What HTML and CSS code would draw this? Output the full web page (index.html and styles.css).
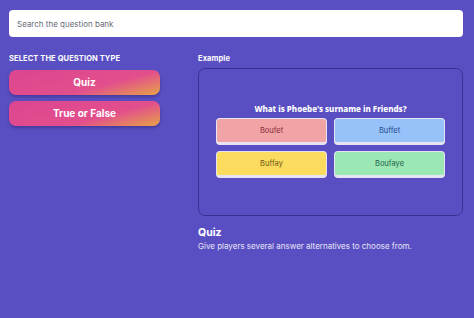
FILE: index.html
```html
<!DOCTYPE html>
<html lang="en">
<head>
    <meta charset="UTF-8">
    <meta name="viewport" content="width=device-width, initial-scale=1.0">
    <title>Question bank</title>
    <link rel="stylesheet" href="styles.css">
</head>
<body>
    <div class="page">
        <input class="search" type="text" placeholder="Search the question bank">
        <div class="cols">
            <div class="types">
                <div class="label">SELECT THE QUESTION TYPE</div>
                <a href="#" class="typeBtn">Quiz</a>
                <a href="#" class="typeBtn">True or False</a>
            </div>
            <div class="example">
                <div class="label">Example</div>
                <div class="preview">
                    <div class="question">What is Phoebe's surname in Friends?</div>
                    <div class="answers">
                        <div class="answer red">Boufet</div>
                        <div class="answer blue">Buffet</div>
                        <div class="answer yellow">Buffay</div>
                        <div class="answer green">Boufaye</div>
                    </div>
                </div>
                <div class="typeName">Quiz</div>
                <div class="typeDesc">Give players several answer alternatives to choose from.</div>
            </div>
        </div>
    </div>
</body>
</html>
```

FILE: styles.css
```css
*{
    box-sizing: border-box;
}
body{
    margin: 0;
    background: #5a4fc2;
    font-family: Inter, "Liberation Sans", sans-serif;
    color: #fff;
}
.page{
    padding: 10px 11px 0 9px;
}
.search{
    display: block;
    width: 100%;
    height: 27px;
    border: none;
    border-radius: 4px;
    padding: 0 8px;
    font-family: Inter, "Liberation Sans", sans-serif;
    font-size: 8px;
    color: #333;
    outline: none;
}
.search::placeholder{
    color: #6b6b78;
}
.cols{
    display: flex;
    gap: 38px;
    margin-top: 17px;
}
.types{
    width: 151px;
}
.example{
    flex: 1;
}
.label{
    font-size: 7.5px;
    font-weight: 700;
    height: 14px;
    line-height: 9px;
    letter-spacing: 0.1px;
}
.types .label{
    height: 16px;
}
.typeBtn{
    display: block;
    height: 25px;
    line-height: 25px;
    margin-bottom: 6px;
    border-radius: 7px;
    text-align: center;
    text-decoration: none;
    color: #fff;
    font-size: 10px;
    font-weight: 700;
    background: linear-gradient(165deg, #dc4591 0%, #e24f8c 62%, #e7a247 100%);
    box-shadow: 0 2px 3px rgba(40, 30, 110, 0.45);
}
.preview{
    height: 148px;
    border: 1.5px solid #3a3196;
    border-radius: 7px;
    display: flex;
    flex-direction: column;
    justify-content: center;
    align-items: center;
    padding-bottom: 3px;
}
.question{
    font-family: "Noto Sans", sans-serif;
    font-weight: 800;
    font-size: 8px;
    margin-bottom: 4px;
}
.answers{
    display: grid;
    grid-template-columns: 111px 111px;
    gap: 6px 7px;
}
.answer{
    height: 27px;
    border: 1.5px solid #e6e4f2;
    border-bottom-width: 3px;
    border-radius: 4px;
    display: flex;
    align-items: center;
    justify-content: center;
    font-size: 7.5px;
}
.red{
    background: #f0a4a6;
    color: #8a2a36;
}
.blue{
    background: #96c2f9;
    color: #274a8c;
}
.yellow{
    background: #fbdc5e;
    color: #6f5512;
}
.green{
    background: #9be8b4;
    color: #22624a;
}
.typeName{
    margin-top: 10px;
    font-size: 10.5px;
    font-weight: 700;
}
.typeDesc{
    margin-top: 2px;
    font-size: 8px;
    color: #e8e6f8;
}
```
